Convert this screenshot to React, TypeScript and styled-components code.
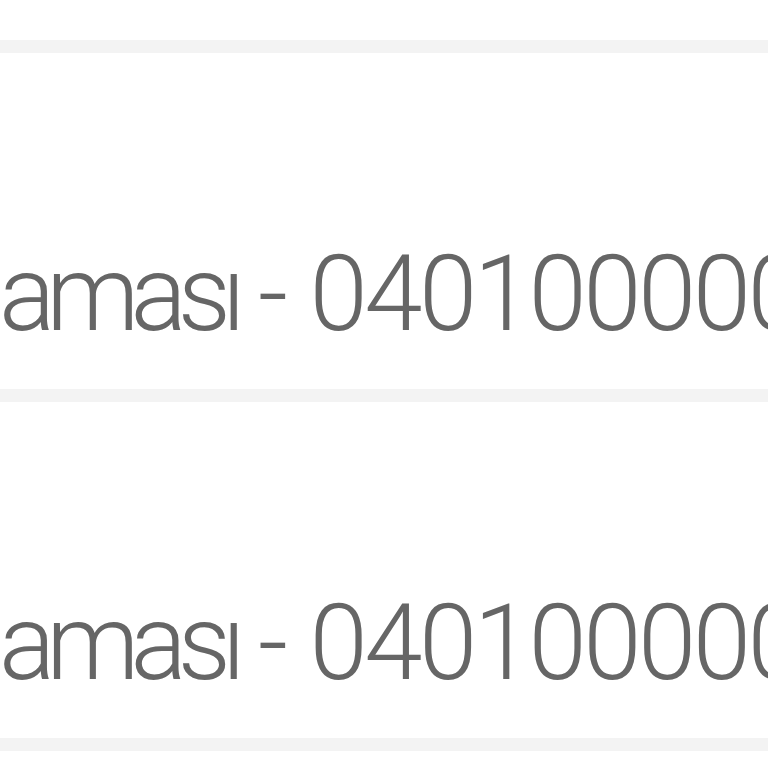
import React from 'react'
import styled, { createGlobalStyle } from 'styled-components'

const GlobalStyle = createGlobalStyle`
    html, body {
        margin: 0;
        padding: 0;
        background: #ffffff;
        overflow: hidden;
    }
`

const List = styled.ul`
    list-style: none;
    margin: 0;
    padding: 0;
    width: 768px;
    height: 768px;
    overflow: hidden;
    background: #ffffff;
`

// the tail of the entry above, cut off by the viewport
const Stub = styled.li`
    height: 40px;
    border-bottom: 13px solid #f3f3f3;
`

const Row = styled.li`
    height: 336px;
    box-sizing: content-box;
    border-bottom: 13px solid #f3f3f3;
    overflow: hidden;
`

const Title = styled.div`
    padding-top: 189px;
    margin-left: -1px;
    font-family: Roboto, "Liberation Sans", sans-serif;
    font-weight: 300;
    font-size: 105px;
    line-height: 105px;
    letter-spacing: -4px;
    color: #666666;
    white-space: nowrap;
`

// the word part of the title runs tighter than the number
const Word = styled.span`
    letter-spacing: -9px;
`

const Code = styled.span`
    margin-left: 4px;
    letter-spacing: -3.5px;
`

const rows = [
    { word: 'aması', code: '0401000000' },
    { word: 'aması', code: '0401000000' },
]

const App: React.FC = () =>
    <>
        <GlobalStyle />
        <List>
            <Stub />
            {rows.map((r, i) =>
                <Row key={i}>
                    <Title>
                        <Word>{r.word}</Word> - <Code>{r.code}</Code>
                    </Title>
                </Row>
            )}
        </List>
    </>

export default App
